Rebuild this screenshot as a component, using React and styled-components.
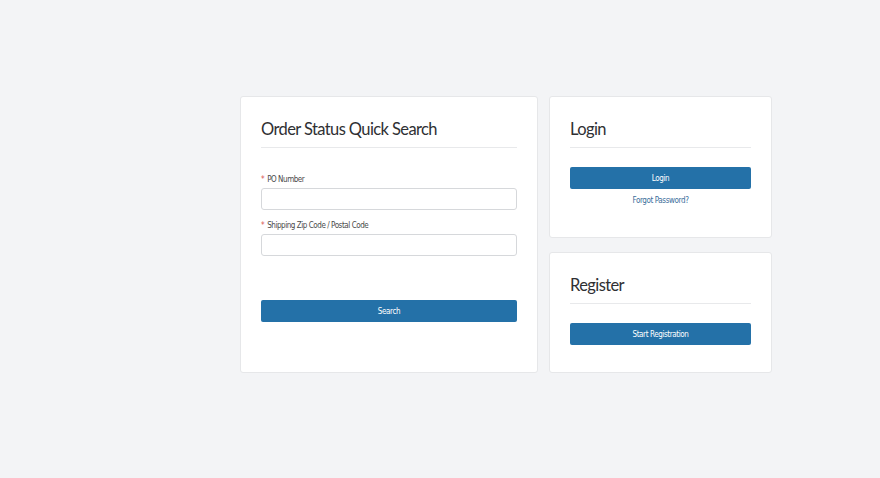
import React from 'react'
import styled, { createGlobalStyle } from 'styled-components'

const GlobalStyle = createGlobalStyle`
  html, body {
    margin: 0;
    padding: 0;
    background-color: #f3f4f6;
  }
  body {
    font-family: Lato, "Open Sans", "Liberation Sans", sans-serif;
    color: #333;
  }
`

const Page = styled.div`
  width: 880px;
  height: 478px;
  box-sizing: border-box;
  padding: 96px 0 0 240px;
  display: flex;
  align-items: flex-start;
  gap: 11px;
`

const Card = styled.div`
  background: #fff;
  border: 1px solid #e6e7e9;
  border-radius: 3px;
  box-sizing: border-box;
  width: ${p => p.$width}px;
  height: ${p => p.$height}px;
  padding: ${p => p.$top}px 20px 0 20px;
`

const Column = styled.div`
  display: flex;
  flex-direction: column;
  gap: 14px;
`

const Title = styled.h2`
  margin: 0;
  font-family: Lato, "Open Sans", sans-serif;
  font-weight: 400;
  font-size: 16.5px;
  letter-spacing: -0.6px;
  line-height: 20px;
  color: #2f3033;
  padding-bottom: 8px;
  border-bottom: 1px solid #e8e9eb;
`

const Form = styled.div`
  display: flex;
  flex-direction: column;
  margin-top: ${p => p.$top}px;
`

const Label = styled.label`
  font-family: "DejaVu Sans Condensed", "Liberation Sans", sans-serif;
  font-stretch: condensed;
  font-size: 8px;
  letter-spacing: -0.45px;
  color: #4a4a4a;
  line-height: 10px;
  margin-bottom: 3px;
  & span {
    color: #d9534f;
    margin-right: 3px;
  }
`

const Input = styled.input`
  box-sizing: border-box;
  width: 100%;
  height: 22px;
  border: 1px solid #d6d8db;
  border-radius: 3px;
  background: #fff;
  margin-bottom: 11px;
  outline: none;
`

const Button = styled.button`
  box-sizing: border-box;
  width: 100%;
  height: 22px;
  border: none;
  border-radius: 2px;
  background-color: #2471a8;
  color: #fff;
  font-family: "DejaVu Sans Condensed", "Liberation Sans", sans-serif;
  font-stretch: condensed;
  font-size: 8px;
  letter-spacing: -0.4px;
  margin-top: ${p => p.$top || 0}px;
  cursor: pointer;
`

const LinkText = styled.a`
  display: block;
  text-align: center;
  margin-top: 7px;
  font-family: "DejaVu Sans Condensed", "Liberation Sans", sans-serif;
  font-stretch: condensed;
  font-size: 8px;
  letter-spacing: -0.4px;
  color: #3b6e9b;
  text-decoration: none;
`

function App() {
  return (
    <>
      <GlobalStyle />
      <Page>
        <Card $width={298} $height={277} $top={22}>
          <Title>Order Status Quick Search</Title>
          <Form $top={27}>
            <Label><span>*</span>PO Number</Label>
            <Input />
            <Label><span>*</span>Shipping Zip Code / Postal Code</Label>
            <Input />
            <Button $top={33}>Search</Button>
          </Form>
        </Card>
        <Column>
          <Card $width={223} $height={142} $top={22}>
            <Title>Login</Title>
            <Button $top={19}>Login</Button>
            <LinkText href="#">Forgot Password?</LinkText>
          </Card>
          <Card $width={223} $height={121} $top={22}>
            <Title>Register</Title>
            <Button $top={19}>Start Registration</Button>
          </Card>
        </Column>
      </Page>
    </>
  )
}

export default App
